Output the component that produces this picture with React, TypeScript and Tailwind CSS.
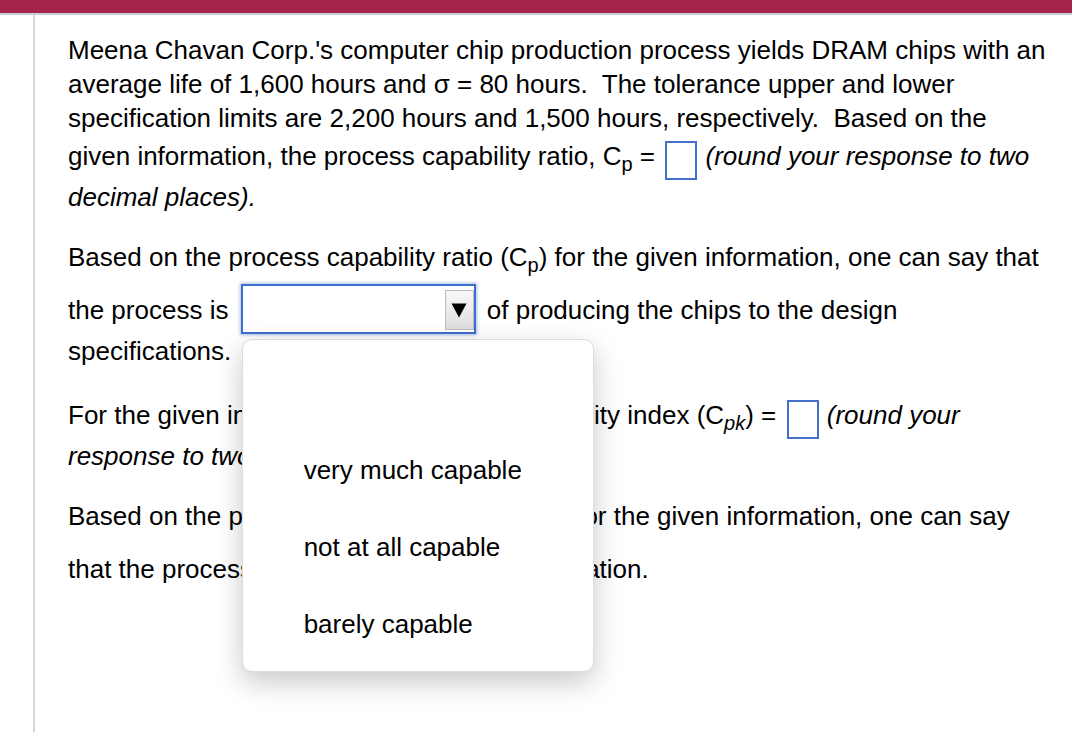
import React from 'react';

const AnswerBox = () => (
  <span className="inline-block align-[-15px] mt-[6px] w-[32px] h-[39px] ml-[3px] mr-[1px] border-2 border-[#4570c9] bg-white"></span>
);

const Sub = ({ children, italic }: { children: React.ReactNode; italic?: boolean }) => (
  <span className={`align-[-6px] text-[20px] leading-none ${italic ? 'italic' : ''}`}>{children}</span>
);

const Arrow = () => (
  <svg width="16" height="15" viewBox="0 0 16 15" className="block">
    <path d="M0.5 0.5 L15.5 0.5 L8 14.5 Z" fill="#000" />
  </svg>
);

const OPTIONS = ['', 'very much capable', 'not at all capable', 'barely capable'];

// one select; only the first is shown open with its option list
const Select = ({ open, width }: { open?: boolean; width: string }) => (
  <span
    className={`relative inline-block align-[-15px] mt-[9px] h-[50px] ml-[5px] mr-[4px] bg-white ${width} ${
      open ? 'border-2 border-[#3f6fcd] shadow-[0_0_3px_1px_rgba(63,111,205,0.45)]' : 'border border-[#9a9a9a]'
    }`}
  >
    <span className="absolute right-0 top-[4px] w-[29px] h-[40px] flex items-center justify-center border border-[#bdbdbd] bg-gradient-to-b from-[#f8f8f8] to-[#dedede]">
      <Arrow />
    </span>
    {open && (
      <span className="absolute z-10 left-[-1px] top-[53px] w-[352px] h-[333px] py-[14px] flex flex-col bg-white rounded-[10px] border border-[#dcdcdc] shadow-[0_10px_28px_rgba(0,0,0,0.22)]">
        {OPTIONS.map((o, i) => (
          <span key={i} className="h-[77px] shrink-0 flex items-center pl-[61px] text-[26px] leading-none">
            {o}
          </span>
        ))}
      </span>
    )}
  </span>
);

export default function App() {
  return (
    <div className="min-h-screen bg-white text-black font-['Liberation_Sans',Arial,Helvetica,sans-serif]">
      <div className="h-[13px] bg-[#a4244c]"></div>
      <div className="h-[2px] bg-[#c9cdd9]"></div>

      <div className="flex min-h-[717px]">
        <div className="w-[35px] shrink-0 border-r-2 border-[#d3d6e0]"></div>

        <div className="w-[1017px] pl-[33px] pt-[18px] text-[26px] leading-[34px]">
          <p>
            Meena Chavan Corp.'s computer chip production process yields DRAM chips with an average life of 1,600
            hours and σ = 80 hours.&nbsp; The tolerance upper and lower specification limits are 2,200 hours and
            1,500 hours, respectively.&nbsp; Based on the given information, the process capability ratio, C
            <Sub>p</Sub> = <AnswerBox /> <i>(round your response to two decimal places).</i>
          </p>

          <p className="mt-[26px]">
            Based on the process capability ratio (C<Sub>p</Sub>) for the given information, one can say that the
            process is <Select open width="w-[235px]" /> of producing the chips to the design specifications.
          </p>

          <p className="mt-[26px]">
            For the given information, the process capability index (C<Sub italic>pk</Sub>) = <AnswerBox />{' '}
            <i>(round your response to two decimal places).</i>
          </p>

          <p className="mt-[26px]">
            Based on the process capability index (C<Sub italic>pk</Sub>) for the given information, one can say
            that the process is <Select width="w-[196px]" /> specification.
          </p>
        </div>
      </div>
    </div>
  );
}
